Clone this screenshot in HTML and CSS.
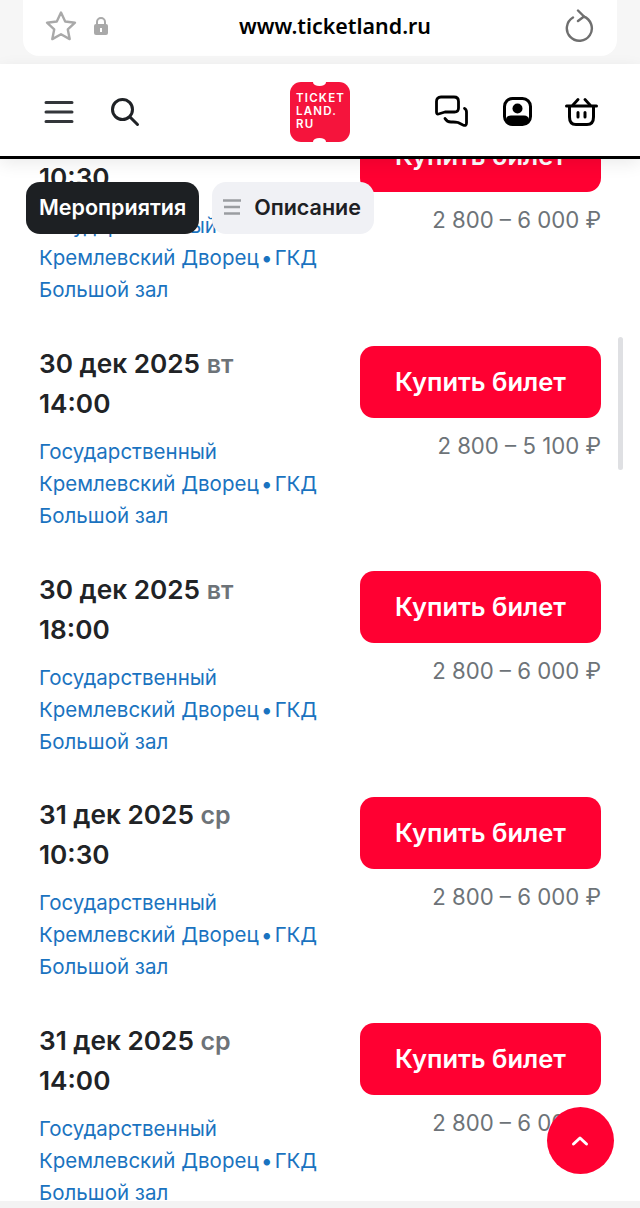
FILE: index.html
```html
<!DOCTYPE html>
<html lang="ru">
<head>
  <meta charset="UTF-8">
  <meta name="viewport" content="width=device-width, initial-scale=1.0">
  <title>Ticketland</title>
  <link rel="stylesheet" href="styles.css">
</head>
<body>

  <div class="browser-bar">
    <div class="address">
      <svg class="star" width="34" height="32" viewBox="0 0 34 32"><path d="M17 2.500l4.200 9 9.800 1.200-7.200 6.700 1.900 9.700L17 24.300l-8.700 4.800 1.900-9.700L3 12.700l9.800-1.200z" fill="none" stroke="#a9a9a9" stroke-width="2.400" stroke-linejoin="round"/></svg>
      <svg class="lock" width="16" height="20" viewBox="0 0 16 20"><path d="M4 9V6a4 4 0 0 1 8 0v3" fill="none" stroke="#a9a9a9" stroke-width="2"/><rect x="1" y="8" width="14" height="11" rx="2" fill="#a9a9a9"/><rect x="7" y="12" width="2" height="4" fill="#fff"/></svg>
      <span class="url">www.ticketland.ru</span>
      <svg class="reload" width="30" height="34" viewBox="0 0 30 34"><path d="M19.500 7.500A12.500 12.500 0 1 1 9 8.500" fill="none" stroke="#6f6f6f" stroke-width="2.400" stroke-linecap="round"/><path d="M14 1.500l6 6-6 4.500" fill="none" stroke="#6f6f6f" stroke-width="2.400" stroke-linecap="round" stroke-linejoin="round"/></svg>
    </div>
  </div>

  <header class="site-header">
    <div class="header-left">
      <svg width="30" height="24" viewBox="0 0 30 24"><path d="M2 2.500h26M2 12h26M2 21.500h26" stroke="#33363a" stroke-width="3" stroke-linecap="round"/></svg>
      <svg width="30" height="30" viewBox="0 0 30 30"><circle cx="12.500" cy="12.500" r="10" fill="none" stroke="#1f2226" stroke-width="3"/><path d="M20 20l7.500 7.500" stroke="#1f2226" stroke-width="3" stroke-linecap="round"/></svg>
    </div>
    <div class="logo">
      <span>TICKET</span>
      <span>LAND.</span>
      <span>RU</span>
    </div>
    <div class="header-right">
      <svg width="34" height="34" viewBox="0 0 34 34"><path d="M6 2H19Q23.500 2 23.500 6.500V13Q23.500 17 19.500 17H10L3.500 19Q1.500 19.500 1.500 17V6.500Q1.500 2 6 2z" fill="none" stroke="#000" stroke-width="2.800" stroke-linejoin="round"/><path d="M29.500 13.500Q31.500 14.500 31.500 17V28Q31.500 31.500 28 30L23 27.500Q21 27 18 27H16Q12 27 10 23.500" fill="none" stroke="#000" stroke-width="2.800" stroke-linecap="round" stroke-linejoin="round"/></svg>
      <svg width="29" height="29" viewBox="0 0 29 29"><rect x="1.500" y="1.500" width="26" height="26" rx="8" fill="#fff" stroke="#000" stroke-width="3"/><circle cx="14.500" cy="11.500" r="5" fill="#000"/><path d="M3 26v-3c0-3 2-4.500 5-4.500h13c3 0 5 1.500 5 4.500v3z" fill="#000"/></svg>
      <svg width="33" height="28" viewBox="0 0 33 28"><path d="M1.500 8h30" stroke="#000" stroke-width="3" stroke-linecap="round"/><path d="M4.500 8v11c0 5 2.500 7.500 6.500 7.500h11c4 0 6.500-2.500 6.500-7.500V8" fill="none" stroke="#000" stroke-width="3"/><path d="M8 7l5-5.500M25 7l-5-5.500" stroke="#000" stroke-width="2.800" stroke-linecap="round"/><path d="M13 14.500v4.500M20 14.500v4.500" stroke="#000" stroke-width="3" stroke-linecap="round"/></svg>
    </div>
  </header>

  <main class="events">
    <div class="event-list">
      <div class="event">
        <div class="event-info">
          <div class="event-date">30 дек 2025 <span class="weekday">вт</span></div>
          <div class="event-date">10:30</div>
          <a class="venue" href="#">Государственный<br>Кремлевский Дворец<span class="sep"> • </span>ГКД<br>Большой зал</a>
        </div>
        <div class="event-buy">
          <a class="buy-btn" href="#">Купить билет</a>
          <div class="price">2 800 – 6 000 ₽</div>
        </div>
      </div>
      <div class="event">
        <div class="event-info">
          <div class="event-date">30 дек 2025 <span class="weekday">вт</span></div>
          <div class="event-date">14:00</div>
          <a class="venue" href="#">Государственный<br>Кремлевский Дворец<span class="sep"> • </span>ГКД<br>Большой зал</a>
        </div>
        <div class="event-buy">
          <a class="buy-btn" href="#">Купить билет</a>
          <div class="price">2 800 – 5 100 ₽</div>
        </div>
      </div>
      <div class="event">
        <div class="event-info">
          <div class="event-date">30 дек 2025 <span class="weekday">вт</span></div>
          <div class="event-date">18:00</div>
          <a class="venue" href="#">Государственный<br>Кремлевский Дворец<span class="sep"> • </span>ГКД<br>Большой зал</a>
        </div>
        <div class="event-buy">
          <a class="buy-btn" href="#">Купить билет</a>
          <div class="price">2 800 – 6 000 ₽</div>
        </div>
      </div>
      <div class="event">
        <div class="event-info">
          <div class="event-date">31 дек 2025 <span class="weekday">ср</span></div>
          <div class="event-date">10:30</div>
          <a class="venue" href="#">Государственный<br>Кремлевский Дворец<span class="sep"> • </span>ГКД<br>Большой зал</a>
        </div>
        <div class="event-buy">
          <a class="buy-btn" href="#">Купить билет</a>
          <div class="price">2 800 – 6 000 ₽</div>
        </div>
      </div>
      <div class="event">
        <div class="event-info">
          <div class="event-date">31 дек 2025 <span class="weekday">ср</span></div>
          <div class="event-date">14:00</div>
          <a class="venue" href="#">Государственный<br>Кремлевский Дворец<span class="sep"> • </span>ГКД<br>Большой зал</a>
        </div>
        <div class="event-buy">
          <a class="buy-btn" href="#">Купить билет</a>
          <div class="price">2 800 – 6 000 ₽</div>
        </div>
      </div>
    </div>

    <nav class="tabs">
      <a class="tab tab-active" href="#">Мероприятия</a>
      <a class="tab tab-second" href="#">
        <svg width="18" height="18" viewBox="0 0 18 18"><path d="M0 2.500h18M1 9h16M1 15.500h16" stroke="#9a9da1" stroke-width="2.400"/></svg>
        Описание
      </a>
    </nav>

    <div class="scrollbar"></div>
    <a class="up-btn" href="#">
      <svg width="18" height="12" viewBox="0 0 18 12"><path d="M2.500 9l6.500-6 6.500 6" fill="none" stroke="#fff" stroke-width="3" stroke-linecap="round" stroke-linejoin="round"/></svg>
    </a>
  </main>

  <div class="bottom-strip"></div>

</body>
</html>
```

FILE: styles.css
```css
* {
  box-sizing: border-box;
}

body {
  font-family: Inter, "Noto Sans", sans-serif;
  background-color: #fff;
  margin: 0;
  padding: 0;
  height: 1208px;
  display: flex;
  flex-direction: column;
  overflow: hidden;
}

a {
  text-decoration: none;
}

.browser-bar {
  background-color: #f6f6f6;
  height: 64px;
  padding: 0 23px;
}

.address {
  background-color: #fff;
  height: 56px;
  border-radius: 0 0 16px 16px;
  display: flex;
  align-items: center;
  padding: 0 23px 4px 21px;
}

.lock {
  margin-left: 15px;
}

.url {
  flex: 1;
  text-align: center;
  font-size: 21.400px;
  font-weight: 600;
  color: #000;
  font-family: "Noto Sans", sans-serif;
  margin: 0 0 2px -3px;
}

.site-header {
  height: 95px;
  background-color: #fff;
  border-bottom: 3px solid #000;
  box-shadow: 0 5px 16px rgba(0, 0, 0, 0.08);
  display: grid;
  grid-template-columns: 1fr 60px 1fr;
  align-items: center;
  padding: 3px 43px 0;
  position: relative;
  z-index: 2;
}

.header-left {
  display: flex;
  align-items: center;
  gap: 36px;
  margin-left: 1px;
}

.header-right {
  display: flex;
  align-items: center;
  justify-content: flex-end;
  gap: 33.500px;
  margin-right: -1px;
}

.logo {
  background-color: #f5143c;
  width: 60px;
  height: 60px;
  border-radius: 11px;
  color: #fff;
  font-size: 11.500px;
  font-weight: 600;
  letter-spacing: 1.200px;
  line-height: 13px;
  display: flex;
  flex-direction: column;
  justify-content: center;
  padding-left: 6px;
  position: relative;
}

.logo::before,
.logo::after {
  content: "";
  position: absolute;
  left: 23px;
  width: 13px;
  height: 7px;
  border-radius: 50%;
  background-color: #fff;
}

.logo::before {
  top: -3px;
}

.logo::after {
  bottom: -3px;
}

.events {
  flex: 1;
  position: relative;
  overflow: hidden;
}

.event-list {
  margin-top: -40.600px;
  padding: 0 39px;
}

.event {
  display: flex;
  justify-content: space-between;
  height: 225.700px;
}

.event-date {
  font-size: 26.200px;
  font-weight: 600;
  line-height: 39px;
  color: #212326;
}

.weekday {
  font-size: 25px;
  color: #6d7378;
}

.venue {
  display: block;
  margin-top: 13px;
  font-size: 20.500px;
  line-height: 32px;
  color: #1a73c0;
}

.sep {
  word-spacing: -3.500px;
}

.event-buy {
  display: flex;
  flex-direction: column;
  align-items: flex-end;
}

.buy-btn {
  display: block;
  width: 241px;
  height: 72px;
  line-height: 72px;
  text-align: center;
  background-color: #ff0032;
  color: #fff;
  font-size: 25.500px;
  font-weight: 600;
  border-radius: 14px;
  margin-top: 1.600px;
}

.price {
  font-size: 22.200px;
  line-height: 30px;
  color: #6d7378;
  margin-top: 13px;
}

.tabs {
  position: absolute;
  top: 23px;
  left: 26px;
  display: flex;
  gap: 13px;
}

.tab {
  height: 52px;
  display: flex;
  align-items: center;
  gap: 13px;
  padding: 0 13px 2px;
  border-radius: 14px;
  background-color: #f0f1f5;
  color: #1d2023;
  font-size: 21.500px;
  font-weight: 600;
}

.tab-second {
  padding-left: 11px;
}

.tab-active {
  background-color: #1d2023;
  color: #fff;
}

.scrollbar {
  position: absolute;
  top: 178px;
  right: 17px;
  width: 5px;
  height: 133px;
  border-radius: 3px;
  background-color: #dfe0e3;
}

.up-btn {
  position: absolute;
  top: 948px;
  left: 546.500px;
  width: 67px;
  height: 67px;
  border-radius: 50%;
  background-color: #ff0032;
  display: flex;
  align-items: center;
  justify-content: center;
}

.bottom-strip {
  height: 7px;
  background-color: #f3f3f3;
}
```
